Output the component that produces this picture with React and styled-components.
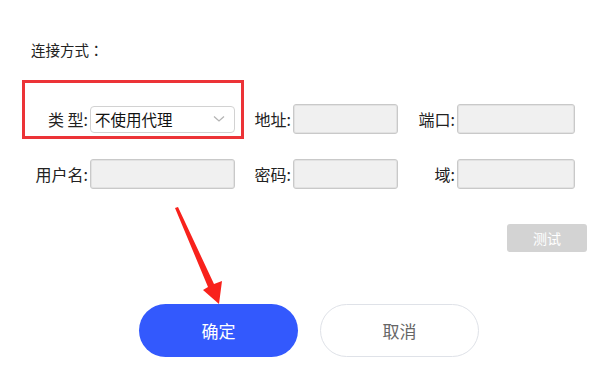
import React from "react";
import styled, { createGlobalStyle } from "styled-components";

const Global = createGlobalStyle`
  html, body { margin: 0; padding: 0; background: #fff; }
  body { font-family: "Noto Sans CJK SC", "Noto Sans", sans-serif; color: #333; }
  * { box-sizing: border-box; }
`;

const Page = styled.div`
  position: relative;
  width: 594px;
  height: 384px;
  overflow: hidden;
  background: #fff;
`;

const Title = styled.div`
  padding: 40px 0 0 31px;
  font-family: "Noto Sans CJK TC", "Noto Sans CJK SC", sans-serif;
  font-size: 14.5px;
  line-height: 20px;
  color: #222;
`;

const FormGrid = styled.div`
  margin: 44px 0 0 28px;
  display: grid;
  grid-template-columns: 62px 145px 58px 105px 59px 118px;
  grid-auto-rows: 30px;
  row-gap: 25px;
  align-items: center;
`;

const Label = styled.label`
  text-align: right;
  padding-right: 2px;
  font-size: 16px;
  line-height: 20px;
  color: #222;
  white-space: pre;
`;

const Input = styled.div`
  height: 30px;
  background: #f0f0f0;
  border: 1px solid #c9c9c9;
  box-shadow: inset 0 0 0 1px #e2e2e2;
  border-radius: 3px;
`;

const Select = styled.div`
  height: 27px;
  background: #fff;
  border: 1px solid #d2d2d2;
  border-radius: 4px;
  display: flex;
  align-items: center;
  justify-content: space-between;
  padding: 0 9px 0 4px;
  font-size: 15.5px;
  color: #111;
`;

const TestRow = styled.div`
  display: flex;
  justify-content: flex-end;
  padding-right: 7px;
  margin-top: 35px;
`;

const TestButton = styled.button`
  width: 80px;
  height: 28px;
  border: none;
  border-radius: 3px;
  background: #d3d3d3;
  color: #fff;
  font-family: inherit;
  font-size: 14px;
  padding: 0;
`;

const Actions = styled.div`
  display: flex;
  gap: 22px;
  margin-top: 52px;
  padding-left: 139px;
`;

const PillButton = styled.button`
  width: 159px;
  height: 53px;
  border-radius: 27px;
  font-family: inherit;
  font-size: 17px;
  padding: 0;
  border: ${(p) => (p.$primary ? "none" : "1.5px solid #dfe2e8")};
  background: ${(p) => (p.$primary ? "#3359fd" : "#fff")};
  color: ${(p) => (p.$primary ? "#fff" : "#666")};
`;

const HighlightBox = styled.div`
  position: absolute;
  left: 22px;
  top: 80px;
  width: 222px;
  height: 59px;
  border: 3px solid #ec3337;
  pointer-events: none;
`;

const ArrowLayer = styled.svg`
  position: absolute;
  left: 0;
  top: 0;
  pointer-events: none;
`;

const Chevron = () => (
  <svg width="12" height="8" viewBox="0 0 12 8">
    <path d="M1 1.5 L6 6 L11 1.5" fill="none" stroke="#b4b4b4" strokeWidth="1.3" />
  </svg>
);

export default function App() {
  return (
    <>
      <Global />
      <Page>
        <Title>连接方式：</Title>
        <FormGrid>
          <Label>类 型:</Label>
          <Select>
            <span>不使用代理</span>
            <Chevron />
          </Select>
          <Label>地址:</Label>
          <Input />
          <Label>端口:</Label>
          <Input />
          <Label>用户名:</Label>
          <Input />
          <Label>密码:</Label>
          <Input />
          <Label>域:</Label>
          <Input />
        </FormGrid>
        <TestRow>
          <TestButton>测试</TestButton>
        </TestRow>
        <Actions>
          <PillButton $primary>确定</PillButton>
          <PillButton>取消</PillButton>
        </Actions>
        <HighlightBox />
        <ArrowLayer width="594" height="384" viewBox="0 0 594 384">
          <polygon
            points="175,208 178,207 214,284 222,281 219,304 203,290 208,287"
            fill="#f8221c"
          />
        </ArrowLayer>
      </Page>
    </>
  );
}
